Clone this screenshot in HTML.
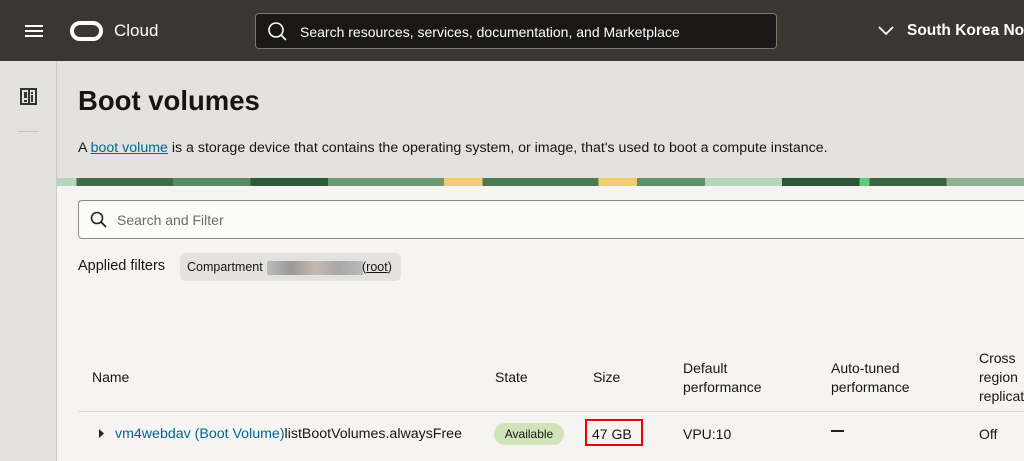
<!DOCTYPE html>
<html><head><meta charset="utf-8"><style>
*{margin:0;padding:0;box-sizing:border-box}
body{width:1024px;height:461px;overflow:hidden;background:#f5f4f2;font-family:"Liberation Sans",sans-serif;color:#161513;position:relative}
.hdr{position:absolute;left:0;top:0;width:1024px;height:61px;background:#3a3632}
.side{position:absolute;left:0;top:61px;width:57px;height:400px;background:#e4e2de;border-right:1px solid #cfccc7}
.top{position:absolute;left:57px;top:61px;width:967px;height:117px;background:#e4e2de}
.banner{position:absolute;left:57px;top:178px;width:967px;height:8px;background:linear-gradient(90deg,#b5d6bd 0 2%,#3e6b48 2% 12%,#5a8c62 12% 20%,#2f5838 20% 28%,#6b9a70 28% 40%,#f0cd6e 40% 44%,#4b7b53 44% 56%,#f0cd6e 56% 60%,#5f9067 60% 67%,#b5d6bd 67% 75%,#2e5535 75% 83%,#5ecb7a 83% 84%,#3a6442 84% 92%,#8cb293 92% 100%)}
.t{position:absolute;white-space:nowrap}
a{color:#00688c}
</style></head><body>
<div class="hdr">
 <div style="position:absolute;left:25px;top:25px;width:18px;height:2px;background:#fff;box-shadow:0 5px 0 #fff,0 10px 0 #fff"></div>
 <div style="position:absolute;left:70px;top:21px;width:33px;height:20px;border:4px solid #fff;border-radius:10px"></div>
 <div class="t" style="left:114px;top:21px;color:#fff;font-size:17px">Cloud</div>
 <div style="position:absolute;left:255px;top:13px;width:522px;height:36px;background:#1a1816;border:1px solid #7a7672;border-radius:4px"></div>
 <svg style="position:absolute;left:267px;top:21px" width="20" height="20"><circle cx="9" cy="9" r="7" fill="none" stroke="#fff" stroke-width="1.6"/><line x1="14" y1="14" x2="19" y2="19" stroke="#fff" stroke-width="1.6"/></svg>
 <div class="t" style="left:300px;top:24px;color:#fff;font-size:14px">Search resources, services, documentation, and Marketplace</div>
 <svg style="position:absolute;left:878px;top:26px" width="16" height="10"><polyline points="1,1 8,8 15,1" fill="none" stroke="#fff" stroke-width="1.8"/></svg>
 <div class="t" style="left:907px;top:22px;color:#fff;font-size:15.5px;font-weight:bold">South Korea No</div>
</div>
<div class="side">
 <div style="position:absolute;left:20px;top:27px;width:17px;height:17px;border:2px solid #333">
  <div style="position:absolute;left:2px;top:2px;width:3px;height:6px;background:#333"></div>
  <div style="position:absolute;left:2px;top:10px;width:3px;height:2px;background:#333"></div>
  <div style="position:absolute;left:6px;top:0;width:1.5px;height:13px;background:#333"></div>
  <div style="position:absolute;left:9px;top:2px;width:2px;height:2px;background:#333"></div>
  <div style="position:absolute;left:9px;top:5px;width:2px;height:7px;background:#333"></div>
 </div>
 <div style="position:absolute;left:18px;top:70px;width:21px;height:1px;background:#c8c4be"></div>
</div>
<div class="top">
 <div class="t" style="left:21px;top:24px;font-size:27.5px;font-weight:bold">Boot volumes</div>
 <div class="t" style="left:21px;top:79px;font-size:14.2px">A <a href="#">boot volume</a> is a storage device that contains the operating system, or image, that's used to boot a compute instance.</div>
</div>
<div class="banner"></div>
<div style="position:absolute;left:78px;top:200px;width:960px;height:39px;background:#fbfbfa;border:1px solid #8a8884;border-radius:4px"></div>
<svg style="position:absolute;left:90px;top:211px" width="18" height="18"><circle cx="7" cy="7" r="5.5" fill="none" stroke="#222" stroke-width="1.6"/><line x1="11" y1="11" x2="16" y2="16" stroke="#222" stroke-width="1.8"/></svg>
<div class="t" style="left:117px;top:212px;font-size:14px;color:#6f6c68">Search and Filter</div>
<div class="t" style="left:78px;top:258px;font-size:14.5px">Applied filters</div>
<div style="position:absolute;left:180px;top:253px;width:221px;height:28px;background:#e4e2de;border-radius:5px"></div>
<div class="t" style="left:187px;top:260px;font-size:12.5px">Compartment</div>
<div style="position:absolute;left:267px;top:261px;width:96px;height:14px;background:linear-gradient(90deg,#bbb,#999,#c4b8b0,#a8a8a8,#bbb)"></div>
<div class="t" style="left:362px;top:260px;font-size:12.5px">(<u>root</u>)</div>
<div class="t" style="left:92px;top:369px;font-size:14px">Name</div>
<div class="t" style="left:495px;top:369px;font-size:14px">State</div>
<div class="t" style="left:593px;top:369px;font-size:14px">Size</div>
<div class="t" style="left:683px;top:359px;font-size:14px;line-height:19px">Default<br>performance</div>
<div class="t" style="left:831px;top:359px;font-size:14px;line-height:19px">Auto-tuned<br>performance</div>
<div class="t" style="left:979px;top:349px;font-size:14px;line-height:19px">Cross<br>region<br>replicat</div>
<div style="position:absolute;left:78px;top:411px;width:946px;height:1px;background:#dcdad6"></div>
<svg style="position:absolute;left:99px;top:429px" width="6" height="9"><polygon points="0,0 5,4.5 0,9" fill="#222"/></svg>
<div class="t" style="left:115px;top:426px;font-size:14.2px"><span style="color:#00688c">vm4webdav (Boot Volume)</span>listBootVolumes.alwaysFree</div>
<div style="position:absolute;left:494px;top:423px;width:70px;height:22px;background:#cfe4b9;border-radius:11px;font-size:12px;text-align:center;line-height:22px">Available</div>
<div style="position:absolute;left:585px;top:419px;width:58px;height:27px;border:2px solid #e00"></div>
<div class="t" style="left:592px;top:426px;font-size:14px">47 GB</div>
<div class="t" style="left:683px;top:426px;font-size:14px">VPU:10</div>
<div style="position:absolute;left:831px;top:430px;width:13px;height:1.5px;background:#222"></div>
<div class="t" style="left:979px;top:426px;font-size:14px">Off</div>
</body></html>
